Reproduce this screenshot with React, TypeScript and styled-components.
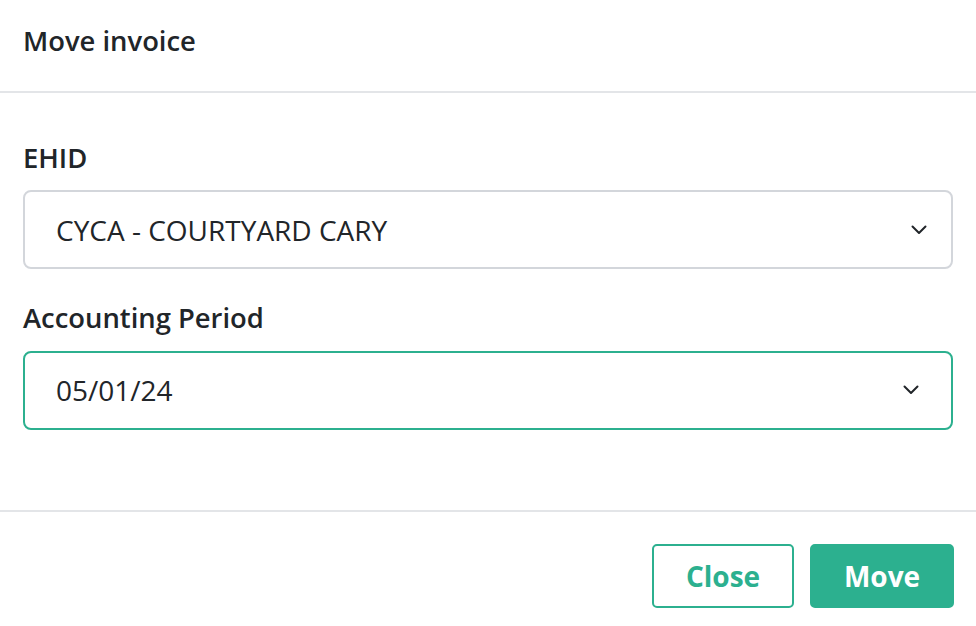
import React from "react";
import styled, { createGlobalStyle } from "styled-components";

const GREEN = "#2cb08f";

const Global = createGlobalStyle`
  html, body { margin: 0; padding: 0; background: #fff; }
  body { font-family: "Open Sans", "Liberation Sans", sans-serif; color: #212529; }
`;

const Modal = styled.div`
  width: 976px;
  height: 626px;
  display: flex;
  flex-direction: column;
  background: #fff;
`;

const Header = styled.div`
  height: 93px;
  box-sizing: border-box;
  padding: 22px 23px 0;
  border-bottom: 2px solid #e3e5e8;
`;

const Title = styled.h5`
  margin: 0;
  font-size: 27.4px;
  font-weight: 600;
  line-height: 1.362;
`;

const Body = styled.div`
  padding: 46px 23px 0;
  height: 417px;
  box-sizing: border-box;
  display: flex;
  flex-direction: column;
  gap: 30px;
`;

const Field = styled.div`
  display: flex;
  flex-direction: column;
  gap: 14px;
`;

const Label = styled.label`
  font-size: 27.4px;
  font-weight: 600;
  line-height: 1.362;
`;

const Select = styled.div<{ $focused?: boolean; $chevronRight: number }>`
  height: 79px;
  box-sizing: border-box;
  border: 2px solid ${(p) => (p.$focused ? GREEN : "#d3d6db")};
  border-radius: 8px;
  display: flex;
  align-items: center;
  justify-content: space-between;
  padding: 0 ${(p) => p.$chevronRight}px 0 31px;
  font-size: 28px;
  line-height: 1.362;
  color: #212529;
`;

const Chevron = styled.svg`
  width: 16px;
  height: 10px;
  flex: none;
`;

const Footer = styled.div`
  flex: 1;
  border-top: 2px solid #e3e5e8;
  display: flex;
  justify-content: flex-end;
  align-items: flex-start;
  gap: 16px;
  padding: 32px 22px 0;
`;

const Button = styled.button<{ $primary?: boolean; $width: number }>`
  width: ${(p) => p.$width}px;
  height: 64px;
  box-sizing: border-box;
  border: 2px solid ${GREEN};
  border-radius: 5px;
  background: ${(p) => (p.$primary ? GREEN : "#fff")};
  color: ${(p) => (p.$primary ? "#fff" : GREEN)};
  font-family: "Open Sans", "Liberation Sans", sans-serif;
  font-size: 28px;
  font-weight: 700;
  padding: 0;
  display: flex;
  align-items: center;
  justify-content: center;
  cursor: pointer;
`;

const ChevronIcon = () => (
  <Chevron viewBox="0 0 16 10" fill="none">
    <path d="M1.5 1.5 L8 8 L14.5 1.5" stroke="#212529" strokeWidth="2" strokeLinecap="round" strokeLinejoin="round" />
  </Chevron>
);

export default function App() {
  return (
    <>
      <Global />
      <Modal>
        <Header>
          <Title>Move invoice</Title>
        </Header>
        <Body>
          <Field>
            <Label>EHID</Label>
            <Select $chevronRight={24}>
              <span>CYCA - COURTYARD CARY</span>
              <ChevronIcon />
            </Select>
          </Field>
          <Field>
            <Label>Accounting Period</Label>
            <Select $focused $chevronRight={32}>
              <span>05/01/24</span>
              <ChevronIcon />
            </Select>
          </Field>
        </Body>
        <Footer>
          <Button $width={142}>Close</Button>
          <Button $primary $width={144}>Move</Button>
        </Footer>
      </Modal>
    </>
  );
}
